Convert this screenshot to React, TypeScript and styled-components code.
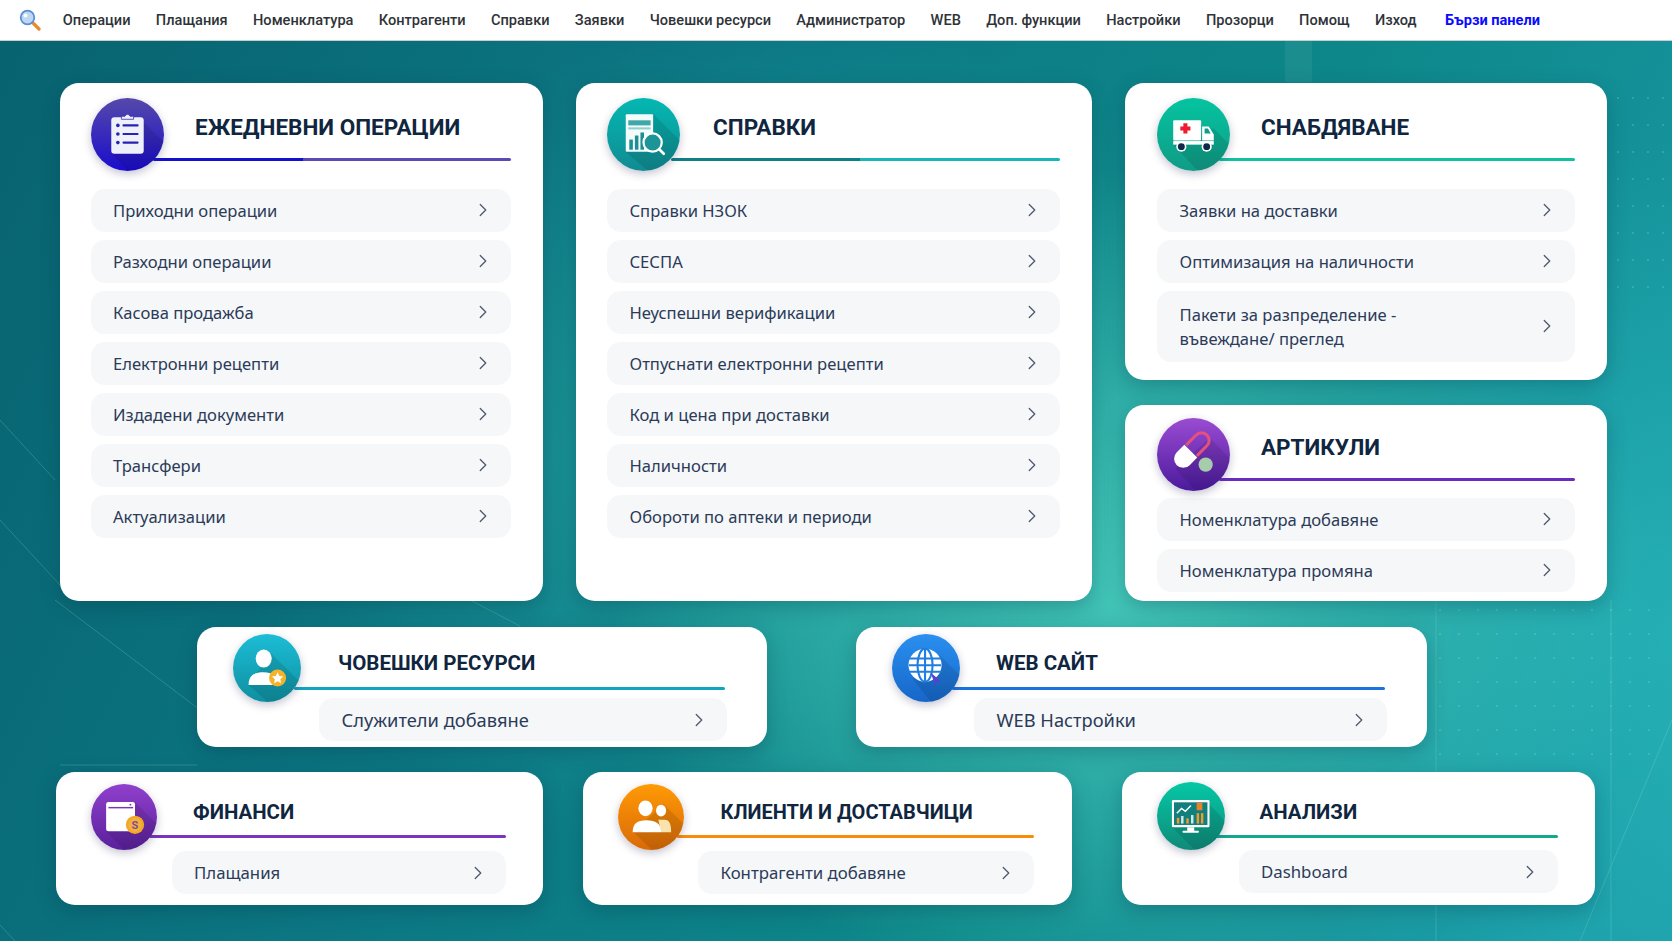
import React from "react";
import styled, { createGlobalStyle } from "styled-components";
import { ChevronRight } from "lucide-react";

const Global = createGlobalStyle`
  html, body { margin: 0; padding: 0; }
  body { font-family: "Noto Sans", sans-serif; }
  * { box-sizing: border-box; }
`;

const Page = styled.div`
  position: relative;
  width: 1672px;
  height: 941px;
  overflow: hidden;
  background:
    radial-gradient(ellipse 520px 420px at 1130px 590px, #43c6b8 0%, rgba(67, 198, 184, 0) 100%),
    radial-gradient(ellipse 600px 420px at 800px 450px, rgba(38, 170, 165, 0.75) 0%, rgba(38, 170, 165, 0) 100%),
    radial-gradient(ellipse 420px 500px at 1672px 640px, rgba(38, 178, 182, 0.9) 0%, rgba(38, 178, 182, 0) 100%),
    linear-gradient(115deg, #08626f 0%, #0c7884 38%, #0d8789 65%, #1c9dab 100%);
`;

const Backdrop = styled.svg`
  position: absolute;
  inset: 0;
  pointer-events: none;
`;

const Nav = styled.nav`
  position: relative;
  display: flex;
  align-items: center;
  gap: 25.3px;
  height: 41px;
  padding: 0 0 0 19px;
  background: #fff;
  border-bottom: 1px solid #c9cfd1;
`;

const NavLink = styled.a<{ $accent?: boolean }>`
  font-family: Roboto, sans-serif;
  font-size: 14.6px;
  font-weight: ${(p) => (p.$accent ? 700 : 500)};
  color: ${(p) => (p.$accent ? "#0a0aff" : "#2f3338")};
  white-space: nowrap;
  ${(p) => (p.$accent ? "margin-left: 3px;" : "")}
`;

const SearchMark = styled.svg`
  width: 23px;
  height: 22px;
  margin-right: -4.5px;
`;

const Main = styled.main`
  position: relative;
  display: flex;
  flex-direction: column;
  padding-top: 41.5px;
`;

const TopGrid = styled.div`
  display: grid;
  grid-template-columns: 483px 516px 482px;
  gap: 25px 33px;
  grid-template-rows: 297px 196.5px;
  height: 518.5px;
  padding-left: 60px;
`;

const CardRow = styled.div<{ $left: number; $gap: number; $top: number }>`
  display: flex;
  gap: ${(p) => p.$gap}px;
  margin-top: ${(p) => p.$top}px;
  padding-left: ${(p) => p.$left}px;
`;

const Card = styled.section<{ $w?: number; $h?: number; $tall?: boolean; $pl: number; $pt: number; $pr?: number; $ml?: number }>`
  ${(p) => (p.$w ? `width: ${p.$w}px;` : "")}
  ${(p) => (p.$h ? `height: ${p.$h}px;` : "")}
  ${(p) => (p.$tall ? "grid-row: span 2;" : "")}
  margin-left: ${(p) => p.$ml ?? 0}px;
  padding: ${(p) => p.$pt}px ${(p) => p.$pr ?? 32.5}px 0 ${(p) => p.$pl}px;
  background: #fff;
  border-radius: 19px;
  box-shadow: 0 6px 20px rgba(0, 50, 70, 0.28);
`;

const Head = styled.header<{ $h: number }>`
  display: flex;
  height: ${(p) => p.$h}px;
`;

const Disc = styled.div<{ $size: number; $from: string; $to: string }>`
  position: relative;
  z-index: 1;
  flex: none;
  width: ${(p) => p.$size}px;
  height: ${(p) => p.$size}px;
  border-radius: 50%;
  overflow: hidden;
  background: linear-gradient(180deg, ${(p) => p.$from}, ${(p) => p.$to});
  box-shadow: 0 3px 8px rgba(40, 40, 90, 0.28);
`;

const DiscArt = styled.svg`
  display: block;
  width: 100%;
  height: 100%;
`;

const HeadText = styled.div<{ $gap: number }>`
  flex: 1;
  min-width: 0;
  margin-left: ${(p) => p.$gap}px;
`;

const Title = styled.h2<{ $y: number; $fs: number }>`
  margin: ${(p) => p.$y - 15}px 0 0;
  font-family: Roboto, sans-serif;
  font-size: ${(p) => p.$fs}px;
  font-weight: 700;
  line-height: 30px;
  color: #10263f;
  white-space: nowrap;
`;

const Rule = styled.div<{ $top: number; $back: number; $bar: string; $end?: number }>`
  height: 3px;
  margin-top: ${(p) => p.$top}px;
  margin-left: -${(p) => p.$back}px;
  margin-right: ${(p) => p.$end ?? 0}px;
  background: ${(p) => p.$bar};
  border-radius: 2px;
`;

const List = styled.div<{ $indent?: number; $gap?: number }>`
  display: flex;
  flex-direction: column;
  gap: ${(p) => p.$gap ?? 8}px;
  margin-left: ${(p) => p.$indent ?? 0}px;
`;

const Item = styled.a<{ $h?: number; $fs: number }>`
  display: flex;
  align-items: center;
  justify-content: space-between;
  height: ${(p) => p.$h ?? 43}px;
  padding: 0 17px 0 22.5px;
  border-radius: 14px;
  background: #f6f7f9;
  font-family: "Noto Sans", sans-serif;
  font-size: ${(p) => p.$fs}px;
  line-height: 24px;
  color: #2b3b58;
`;

const ItemLabel = styled.span<{ $nudge: number }>`
  padding-top: ${(p) => p.$nudge}px;
`;

const Chevron = styled(ChevronRight)`
  flex: none;
  color: #4d5a6e;
`;

const navItems = [
  "Операции", "Плащания", "Номенклатура", "Контрагенти", "Справки", "Заявки", "Човешки ресурси",
  "Администратор", "WEB", "Доп. функции", "Настройки", "Прозорци", "Помощ", "Изход",
];

const Shade = ({ d }: { d: string }) => <path d={d} fill="#000" opacity={0.1} />;

const ClipboardArt = () => (
  <DiscArt viewBox="0 0 72 72">
    <Shade d="M52 24 L80 52 L80 80 L44 80 L20 55 Z" />
    <rect x="20" y="19" width="32" height="36" rx="3" fill="#eef0fa" />
    <path d="M30 20 v-2 h3.5 a2.6 2.6 0 0 1 5 0 H42 v3 H30 z" fill="#eef0fa" stroke="#3a30b0" strokeWidth="0.8" />
    {[27, 35.5, 44].map((y) => (
      <g key={y}>
        <circle cx="26.5" cy={y} r="1.8" fill="#2a22b4" />
        <rect x="31" y={y - 1} width="16" height="2" rx="1" fill="#2a22b4" />
      </g>
    ))}
  </DiscArt>
);

const ReportArt = () => (
  <DiscArt viewBox="0 0 72 72">
    <Shade d="M46 16 L80 50 L80 80 L50 80 L18 53 Z" />
    <rect x="18.5" y="16" width="27" height="37" rx="1" fill="#f4fbfb" />
    <rect x="21" y="22" width="22" height="5" fill="#3fa8a8" />
    <rect x="21" y="29" width="22" height="2" fill="#8fcfce" />
    <rect x="22" y="41" width="3.5" height="10" fill="#1d8f94" />
    <rect x="27.5" y="37" width="3.5" height="14" fill="#1d8f94" />
    <rect x="33" y="34" width="3.5" height="17" fill="#1d8f94" />
    <circle cx="45" cy="44" r="9" fill="#1d9498" stroke="#fff" strokeWidth="2.2" />
    <path d="M51.5 50.5 L56 55" stroke="#fff" strokeWidth="2.6" strokeLinecap="round" />
  </DiscArt>
);

const TruckArt = () => (
  <DiscArt viewBox="0 0 72 72">
    <Shade d="M56 30 L80 54 L80 80 L48 80 L16 46 Z" />
    <rect x="16" y="22" width="27.5" height="20" rx="1" fill="#fff" />
    <path d="M26 25 h4 v3 h3 v4 h-3 v3 h-4 v-3 h-3 v-4 h3 z" fill="#ee1c2e" />
    <path d="M44.5 28 H51 L56 36 V42 H44.5 Z" fill="#fff" />
    <path d="M47 30 H50.2 L53 35 H47 Z" fill="#159a88" />
    <rect x="16" y="42.5" width="40" height="3.5" fill="#fff" />
    <circle cx="24" cy="48" r="5" fill="#fff" />
    <circle cx="24" cy="48" r="3.4" fill="#10294a" />
    <circle cx="49" cy="48" r="5" fill="#fff" />
    <circle cx="49" cy="48" r="3.4" fill="#10294a" />
  </DiscArt>
);

const PillArt = () => (
  <DiscArt viewBox="0 0 72 72">
    <Shade d="M52 20 L80 48 L80 80 L46 80 L18 50 Z" />
    <g transform="rotate(45 34 32)">
      <path d="M26.5 32 V18 A7.5 7.5 0 0 1 41.5 18 V32" fill="none" stroke="#e5507f" strokeWidth="3" />
      <path d="M25 33 H43 V43.5 A9 9 0 0 1 25 43.5 Z" fill="#fff" />
    </g>
    <circle cx="48" cy="46" r="7" fill="#a6cdab" />
  </DiscArt>
);

const PersonArt = () => (
  <DiscArt viewBox="0 0 72 72">
    <Shade d="M40 20 L80 60 L80 80 L46 80 L16 54 Z" />
    <ellipse cx="32.5" cy="26" rx="8.5" ry="9.5" fill="#fff" />
    <path d="M16.5 54 C16.5 44 22 40.5 32 40.5 C38 40.5 42 42 44 45 L42 54 Z" fill="#fff" />
    <circle cx="47.2" cy="46.6" r="9" fill="#f5b32a" />
    <path d="M47.2 40.6 l1.8 3.9 4.2 .5 -3.1 2.9 .8 4.2 -3.7 -2.1 -3.7 2.1 .8 -4.2 -3.1 -2.9 4.2 -.5 z" fill="#fff" />
  </DiscArt>
);

const GlobeArt = () => (
  <DiscArt viewBox="0 0 72 72">
    <Shade d="M50 22 L80 52 L80 80 L48 80 L22 48 Z" />
    <circle cx="35" cy="33" r="17.5" fill="#fff" />
    <g fill="none" stroke="#1f7ee2" strokeWidth="2.2">
      <ellipse cx="35" cy="33" rx="8" ry="17.5" />
      <path d="M35 15 V51 M18 26 H52 M18 33 H52 M18 40 H52" />
    </g>
    <path d="M41 41 L52 50 L47 50.5 L46 55 Z" fill="#5a3fd4" />
  </DiscArt>
);

const WalletArt = () => (
  <DiscArt viewBox="0 0 72 72">
    <Shade d="M48 20 L80 52 L80 80 L44 80 L17 52 Z" />
    <rect x="16.5" y="19.5" width="31.5" height="32" rx="2.5" fill="#fff" />
    <rect x="19" y="25" width="27" height="1.6" fill="#7a35b8" />
    <circle cx="43" cy="22.5" r="1" fill="#7a35b8" />
    <circle cx="48" cy="44.5" r="10" fill="#f5a623" />
    <circle cx="48" cy="44.5" r="7.5" fill="#f0b23c" />
    <text x="48" y="49" textAnchor="middle" fontFamily="Roboto, sans-serif" fontWeight="700" fontSize="12" fill="#8a4a9a">S</text>
  </DiscArt>
);

const PeopleArt = () => (
  <DiscArt viewBox="0 0 72 72">
    <Shade d="M50 22 L80 52 L80 80 L46 80 L16 52 Z" />
    <ellipse cx="30" cy="26.5" rx="7.8" ry="8.6" fill="#fff" />
    <ellipse cx="47" cy="29" rx="5.5" ry="6.5" fill="#fff" />
    <path d="M44 39 H51 C56 39 58 44 58 52.6 H47 Z" fill="#f8e2ad" />
    <path d="M16 52.6 C16 43 21 39.5 31 39.5 C41 39.5 47 43 47 52.6 Z" fill="#fff" />
  </DiscArt>
);

const MonitorArt = () => (
  <DiscArt viewBox="0 0 72 72">
    <Shade d="M54 22 L80 50 L80 80 L48 80 L16 48 Z" />
    <rect x="15.8" y="19" width="39.8" height="29" rx="1.5" fill="#fff" />
    <rect x="18" y="21.5" width="35.4" height="24" fill="#117f7c" />
    <rect x="32" y="48" width="7.4" height="4" fill="#fff" />
    <rect x="27" y="51.5" width="17.4" height="2.2" rx="1" fill="#fff" />
    <path d="M21 33 L26 28 L30 31 L36 25" fill="none" stroke="#fff" strokeWidth="1.5" />
    <rect x="21" y="38" width="2.6" height="6" fill="#f29a2e" />
    <rect x="25.5" y="36" width="2.6" height="8" fill="#cfe9e6" />
    <rect x="31" y="38.5" width="2.6" height="5.5" fill="#f29a2e" />
    <rect x="36" y="35" width="2.6" height="9" fill="#cfe9e6" />
    <rect x="42" y="33" width="2.6" height="11" fill="#f29a2e" />
    <rect x="46.5" y="33" width="2.6" height="11" fill="#f29a2e" />
    <path d="M42 22 h6 v8 h-6 z" fill="#e9832a" />
  </DiscArt>
);

type HeadSpec = {
  title: string; fs: number; disc: number; from: string; to: string; art: React.ReactNode;
  gap: number; titleY: number; ruleY: number; back: number; height: number; bar: string; end?: number;
};

function CardHead({ s }: { s: HeadSpec }) {
  return (
    <Head $h={s.height}>
      <Disc $size={s.disc} $from={s.from} $to={s.to}>{s.art}</Disc>
      <HeadText $gap={s.gap}>
        <Title $y={s.titleY} $fs={s.fs}>{s.title}</Title>
        <Rule $top={s.ruleY - s.titleY - 15} $back={s.back} $bar={s.bar} $end={s.end} />
      </HeadText>
    </Head>
  );
}

const Row = ({ fs, h, nudge = 2, children }: { fs: number; h?: number; nudge?: number; children: React.ReactNode }) => (
  <Item $fs={fs} $h={h}>
    <ItemLabel $nudge={nudge}>{children}</ItemLabel>
    <Chevron size={22} strokeWidth={1.4} />
  </Item>
);

const MyList = ({ items, fs }: { items: string[]; fs: number }) => (
  <List>{items.map((t) => <Row key={t} fs={fs}>{t}</Row>)}</List>
);

export default function App() {
  return (
    <Page>
      <Global />
      <Backdrop width="1672" height="941" viewBox="0 0 1672 941">
        <g stroke="#9fe6dc" strokeWidth="1" opacity="0.22" fill="none">
          <path d="M0 420 L55 480" />
          <path d="M0 520 L60 585" />
          <path d="M55 600 L200 710" />
          <path d="M60 765 H197" />
          <path d="M0 925 L15 941" />
          <path d="M470 600 L520 626" />
          <path d="M1436 600 V941" />
          <path d="M1611 600 V941" />
          <path d="M1672 720 L1580 941" />
        </g>
        <g fill="#bdf2ea" opacity="0.25">
          {Array.from({ length: 5 }).flatMap((_, c) =>
            Array.from({ length: 8 }).map((_, r) => <circle key={`a${c}-${r}`} cx={1618 + c * 15} cy={98 + r * 27} r="1" />),
          )}
          {Array.from({ length: 12 }).flatMap((_, c) =>
            Array.from({ length: 7 }).map((_, r) => <circle key={`b${c}-${r}`} cx={1440 + c * 19} cy={610 + r * 24} r="0.9" />),
          )}
        </g>
        <rect x="1285" y="41" width="27" height="41" fill="#fff" opacity="0.06" />
      </Backdrop>

      <Nav>
        <SearchMark viewBox="0 0 23 22">
          <path d="M13 13 L20 20" stroke="#e88a2c" strokeWidth="3.2" strokeLinecap="round" />
          <circle cx="8.5" cy="8.5" r="6.8" fill="#bcd8f5" stroke="#5a8fd6" strokeWidth="1.8" />
          <circle cx="6.5" cy="6.5" r="2" fill="#fff" />
        </SearchMark>
        {navItems.map((n) => <NavLink key={n}>{n}</NavLink>)}
        <NavLink $accent>Бързи панели</NavLink>
      </Nav>

      <Main>
        <TopGrid>
          <Card $tall $pl={30.5} $pt={15}>
            <CardHead s={{ title: "ЕЖЕДНЕВНИ ОПЕРАЦИИ", fs: 22.5, disc: 73, from: "#5549aa", to: "#1a0ccc", art: <ClipboardArt />, gap: 31.5, titleY: 29, ruleY: 60, back: 42, height: 91, bar: "linear-gradient(90deg, #1410d0 0 42%, #5b49b6 42% 100%)" }} />
            <MyList fs={16.6} items={["Приходни операции", "Разходни операции", "Касова продажба", "Електронни рецепти", "Издадени документи", "Трансфери", "Актуализации"]} />
          </Card>
          <Card $tall $pl={31} $pt={15}>
            <CardHead s={{ title: "СПРАВКИ", fs: 22.5, disc: 73, from: "#03b8b2", to: "#118b92", art: <ReportArt />, gap: 33, titleY: 29, ruleY: 60, back: 42, height: 91, bar: "linear-gradient(90deg, #0f7f86 0 48.5%, #17b6b8 48.5% 100%)" }} />
            <MyList fs={16.6} items={["Справки НЗОК", "СЕСПА", "Неуспешни верификации", "Отпуснати електронни рецепти", "Код и цена при доставки", "Наличности", "Обороти по аптеки и периоди"]} />
          </Card>
          <Card $pl={32} $pt={15}>
            <CardHead s={{ title: "СНАБДЯВАНЕ", fs: 22.5, disc: 73, from: "#04c4a0", to: "#119b86", art: <TruckArt />, gap: 31, titleY: 29, ruleY: 60, back: 42, height: 91, bar: "#10c2a0" }} />
            <List>
              <Row fs={16.6}>Заявки на доставки</Row>
              <Row fs={16.6}>Оптимизация на наличности</Row>
              <Row fs={16.6} h={71}>
                Пакети за разпределение -<br />въвеждане/ преглед
              </Row>
            </List>
          </Card>
          <Card $pl={32} $pt={13}>
            <CardHead s={{ title: "АРТИКУЛИ", fs: 22.5, disc: 73, from: "#9a4cd2", to: "#4b1a9e", art: <PillArt />, gap: 31, titleY: 29, ruleY: 60, back: 42, height: 80, bar: "#6a2cc0" }} />
            <MyList fs={16.6} items={["Номенклатура добавяне", "Номенклатура промяна"]} />
          </Card>
        </TopGrid>

        <CardRow $left={197} $gap={88.5} $top={26}>
          <Card $w={570} $h={120} $pl={36} $pr={40} $pt={7}>
            <CardHead s={{ title: "ЧОВЕШКИ РЕСУРСИ", fs: 20.5, disc: 68, from: "#1cbdd6", to: "#0f8fa0", art: <PersonArt />, gap: 37, titleY: 29, ruleY: 53, back: 44, height: 64, bar: "#12a5bf", end: 2 }} />
            <List $indent={86}><Row fs={18.3} nudge={0}>Служители добавяне</Row></List>
          </Card>
          <Card $w={571} $h={120} $pl={36.5} $pr={40} $pt={7}>
            <CardHead s={{ title: "WEB САЙТ", fs: 20.5, disc: 68, from: "#2a90f0", to: "#1666c8", art: <GlobeArt />, gap: 36, titleY: 29, ruleY: 53, back: 44, height: 64, bar: "#1a74e0", end: 2 }} />
            <List $indent={82}><Row fs={18.3} nudge={0}>WEB Настройки</Row></List>
          </Card>
        </CardRow>

        <CardRow $left={56} $gap={40} $top={25}>
          <Card $w={487} $h={133} $pl={34.5} $pr={37} $pt={12}>
            <CardHead s={{ title: "ФИНАНСИ", fs: 20.4, disc: 66, from: "#9040cc", to: "#5a209c", art: <WalletArt />, gap: 36.5, titleY: 28, ruleY: 51, back: 44, height: 67, bar: "#7a35c0" }} />
            <List $indent={81}><Row fs={16.8} nudge={0}>Плащания</Row></List>
          </Card>
          <Card $w={489} $h={133} $pl={35} $pr={38} $pt={12}>
            <CardHead s={{ title: "КЛИЕНТИ И ДОСТАВЧИЦИ", fs: 20, disc: 66, from: "#ff9a05", to: "#d86a08", art: <PeopleArt />, gap: 36.5, titleY: 28, ruleY: 51, back: 44, height: 67, bar: "#fb8c0a" }} />
            <List $indent={80}><Row fs={16.8} nudge={0}>Контрагенти добавяне</Row></List>
          </Card>
          <Card $w={473} $h={133} $ml={10} $pl={35} $pr={37} $pt={10}>
            <CardHead s={{ title: "АНАЛИЗИ", fs: 20.4, disc: 68, from: "#05c8a5", to: "#0f8a7a", art: <MonitorArt />, gap: 34.5, titleY: 30, ruleY: 53, back: 44, height: 68, bar: "#12a88e" }} />
            <List $indent={81.5}><Row fs={16.8} nudge={0}>Dashboard</Row></List>
          </Card>
        </CardRow>
      </Main>
    </Page>
  );
}
